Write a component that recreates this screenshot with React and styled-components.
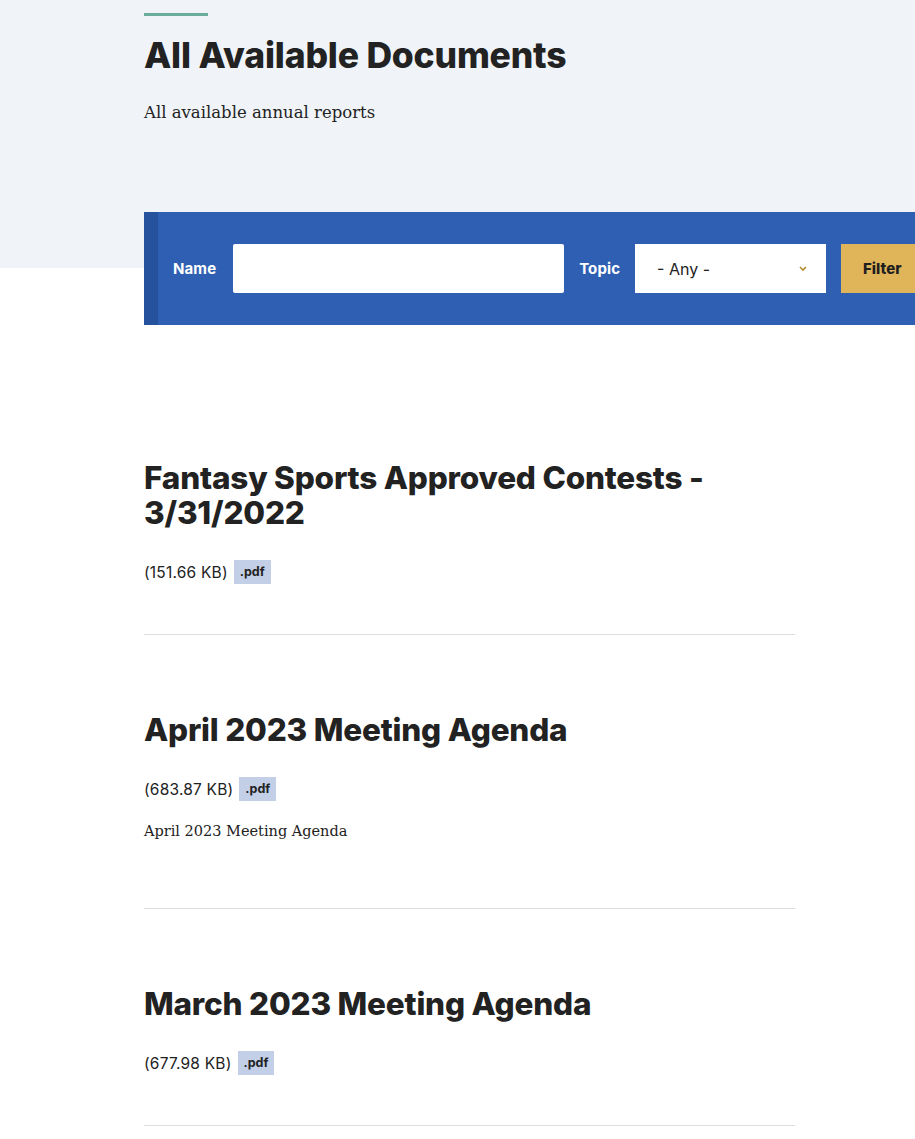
import React from "react";
import styled, { createGlobalStyle } from "styled-components";

const Global = createGlobalStyle`
  body {
    margin: 0;
    background: #ffffff;
    font-family: "Inter", "Liberation Sans", sans-serif;
    color: #222222;
  }
`;

const Hero = styled.header`
  background: #f0f4f8;
  height: 268px;
  padding: 13px 0 0 144px;
  box-sizing: border-box;
`;

const Accent = styled.div`
  width: 64px;
  height: 3px;
  background: #6aab9c;
`;

const Title = styled.h1`
  margin: 18px 0 0;
  font-size: 35.5px;
  line-height: 44px;
  font-weight: 800;
  letter-spacing: -0.2px;
`;

const Lead = styled.p`
  margin: 22px 0 0;
  font-family: "DejaVu Serif", "Liberation Serif", serif;
  font-size: 16.5px;
  line-height: 26px;
`;

const FilterBar = styled.form`
  margin: -56px 0 0 144px;
  height: 113px;
  background: #2f5fb3;
  border-left: 14px solid #26519c;
  display: flex;
  align-items: center;
  padding-left: 15px;
  gap: 15px;
  overflow: hidden;
`;

const Label = styled.label`
  color: #ffffff;
  font-weight: 700;
  font-size: 15px;
  letter-spacing: 0.1px;
`;

const Input = styled.input`
  width: 331px;
  height: 49px;
  margin-left: 2px;
  box-sizing: border-box;
  border: none;
  border-radius: 2px;
  background: #ffffff;
  flex-shrink: 0;
`;

const Select = styled.div`
  width: 191px;
  height: 49px;
  box-sizing: border-box;
  background: #ffffff;
  display: flex;
  align-items: center;
  justify-content: space-between;
  padding: 0 18px 0 22px;
  font-size: 16px;
  flex-shrink: 0;
`;

const Button = styled.button`
  height: 49px;
  padding: 0 22px;
  border: none;
  background: #e0b55a;
  color: #1f1f1f;
  font-family: inherit;
  font-weight: 800;
  font-size: 15px;
  flex-shrink: 0;
  min-width: 100px;
  text-align: left;
`;

const List = styled.main`
  margin: 58px 0 0 144px;
  width: 651px;
`;

const Item = styled.article`
  padding: 77px 0 50px;
  border-bottom: 1px solid #dddddd;
`;

const ItemTitle = styled.h2`
  margin: 0;
  font-size: 31.5px;
  line-height: 35px;
  font-weight: 800;
  letter-spacing: -0.2px;
`;

const Meta = styled.div`
  margin-top: 30px;
  display: flex;
  align-items: center;
  gap: 6px;
  font-size: 15.5px;
  letter-spacing: 0.2px;
  height: 24px;
`;

const Tag = styled.span`
  background: #c3cfe6;
  padding: 0 6px;
  height: 24px;
  line-height: 24px;
  font-size: 12.5px;
  font-weight: 700;
  letter-spacing: 0;
`;

const Desc = styled.p`
  margin: 17px 0 14px;
  font-family: "DejaVu Serif", "Liberation Serif", serif;
  font-size: 14.5px;
  line-height: 26px;
`;

const Chevron = () => (
  <svg width="10" height="7" viewBox="0 0 10 7">
    <path d="M2 2l3 3 3-3" fill="none" stroke="#b38a2e" strokeWidth="1.6" />
  </svg>
);

const docs = [
  { title: "Fantasy Sports Approved Contests - 3/31/2022", size: "151.66 KB" },
  { title: "April 2023 Meeting Agenda", size: "683.87 KB", desc: "April 2023 Meeting Agenda" },
  { title: "March 2023 Meeting Agenda", size: "677.98 KB" },
];

export default function App() {
  return (
    <>
      <Global />
      <Hero>
        <Accent />
        <Title>All Available Documents</Title>
        <Lead>All available annual reports</Lead>
      </Hero>
      <FilterBar>
        <Label>Name</Label>
        <Input type="text" />
        <Label>Topic</Label>
        <Select>
          <span>- Any -</span>
          <Chevron />
        </Select>
        <Button type="button">Filter</Button>
      </FilterBar>
      <List>
        {docs.map((d) => (
          <Item key={d.title}>
            <ItemTitle>{d.title}</ItemTitle>
            <Meta>
              <span>({d.size})</span>
              <Tag>.pdf</Tag>
            </Meta>
            {d.desc && <Desc>{d.desc}</Desc>}
          </Item>
        ))}
      </List>
    </>
  );
}
